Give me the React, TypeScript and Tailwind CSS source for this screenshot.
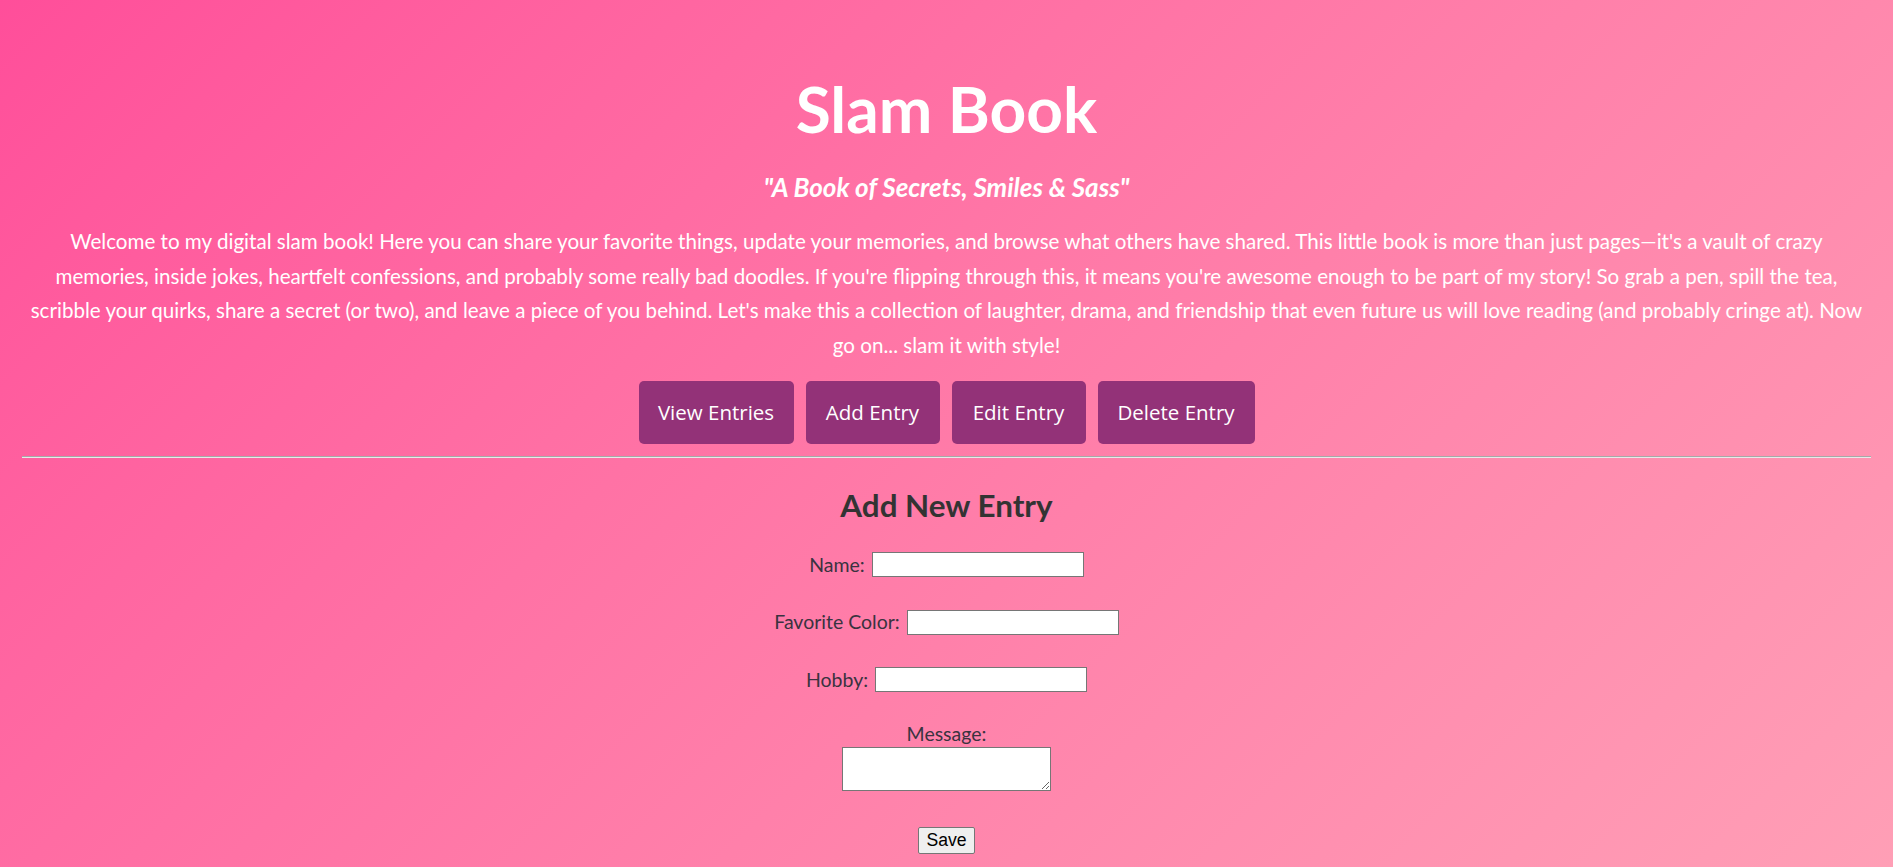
import { useState } from "react";

const intro = [
  "Welcome to my digital slam book! Here you can share your favorite things, update your memories, and browse what others have shared. This little book is more than just pages\u2014it's a vault of crazy",
  "memories, inside jokes, heartfelt confessions, and probably some really bad doodles. If you're flipping through this, it means you're awesome enough to be part of my story! So grab a pen, spill the tea,",
  "scribble your quirks, share a secret (or two), and leave a piece of you behind. Let's make this a collection of laughter, drama, and friendship that even future us will love reading (and probably cringe at). Now",
  "go on... slam it with style!",
];

const actions = [
  { label: "View Entries", width: "w-[155px]" },
  { label: "Add Entry", width: "w-[134px]" },
  { label: "Edit Entry", width: "w-[134px]" },
  { label: "Delete Entry", width: "w-[157px]" },
];

const fields = [
  { id: "name", label: "Name:" },
  { id: "color", label: "Favorite Color:" },
  { id: "hobby", label: "Hobby:" },
];

export default function App() {
  const [entry, setEntry] = useState({ name: "", color: "", hobby: "", message: "" });

  return (
    <div className="min-h-screen bg-linear-135 from-[#ff4e9a] to-[#ff9fb6] px-[22px] pt-[73px] pb-4 text-center font-['Lato','Open_Sans',sans-serif] text-white">
      {/* Header */}
      <h1 className="text-[64px] font-bold leading-[72px]">Slam Book</h1>
      <p className="mt-[26px] text-[26px] font-bold italic leading-[32px]">
        "A Book of Secrets, Smiles &amp; Sass"
      </p>

      <p className="mt-[21px] text-[20.6px] leading-[34.5px]">
        {intro.map((line, i) => (
          <span key={i} className="block whitespace-nowrap">
            {line}
          </span>
        ))}
      </p>

      {/* Navigation */}
      <div className="mt-[19px] flex justify-center gap-[12px]">
        {actions.map((a) => (
          <button
            key={a.label}
            className={`${a.width} h-[63px] rounded-[5px] bg-[#933278] font-['Open_Sans',sans-serif] text-[20.5px] text-white`}
          >
            {a.label}
          </button>
        ))}
      </div>

      <div className="mt-[12px] border-t border-b border-t-[#a8a8a8] border-b-[#e9e9e9]" />

      {/* Form */}
      <h2 className="mt-[29px] text-[31.4px] font-bold leading-[36px] text-[#333]">Add New Entry</h2>

      <form className="mt-[29px] flex flex-col items-center text-[19.5px] text-[#3a3340]" onSubmit={(e) => e.preventDefault()}>
        {fields.map((f, i) => (
          <div key={f.id} className={`flex h-[25px] items-center gap-[7px] ${i > 0 ? "mt-[32.5px]" : ""}`}>
            <label htmlFor={f.id}>{f.label}</label>
            <input
              id={f.id}
              value={entry[f.id as keyof typeof entry]}
              onChange={(e) => setEntry({ ...entry, [f.id]: e.target.value })}
              className="h-[25px] w-[212px] border border-[#767676] bg-white px-1 text-[14px] text-black"
            />
          </div>
        ))}

        <label htmlFor="message" className="mt-[31px] leading-[22px]">Message:</label>
        <textarea
          id="message"
          value={entry.message}
          onChange={(e) => setEntry({ ...entry, message: e.target.value })}
          className="mt-[2px] h-[44px] w-[209px] border border-[#767676] bg-white text-black"
        />

        <button
          type="submit"
          className="mt-[36px] h-[27px] w-[57px] rounded-[2px] border border-[#767676] bg-[#efefef] font-['Liberation_Sans',Arial,sans-serif] text-[17.6px] leading-none text-black"
        >
          Save
        </button>
      </form>
    </div>
  );
}
